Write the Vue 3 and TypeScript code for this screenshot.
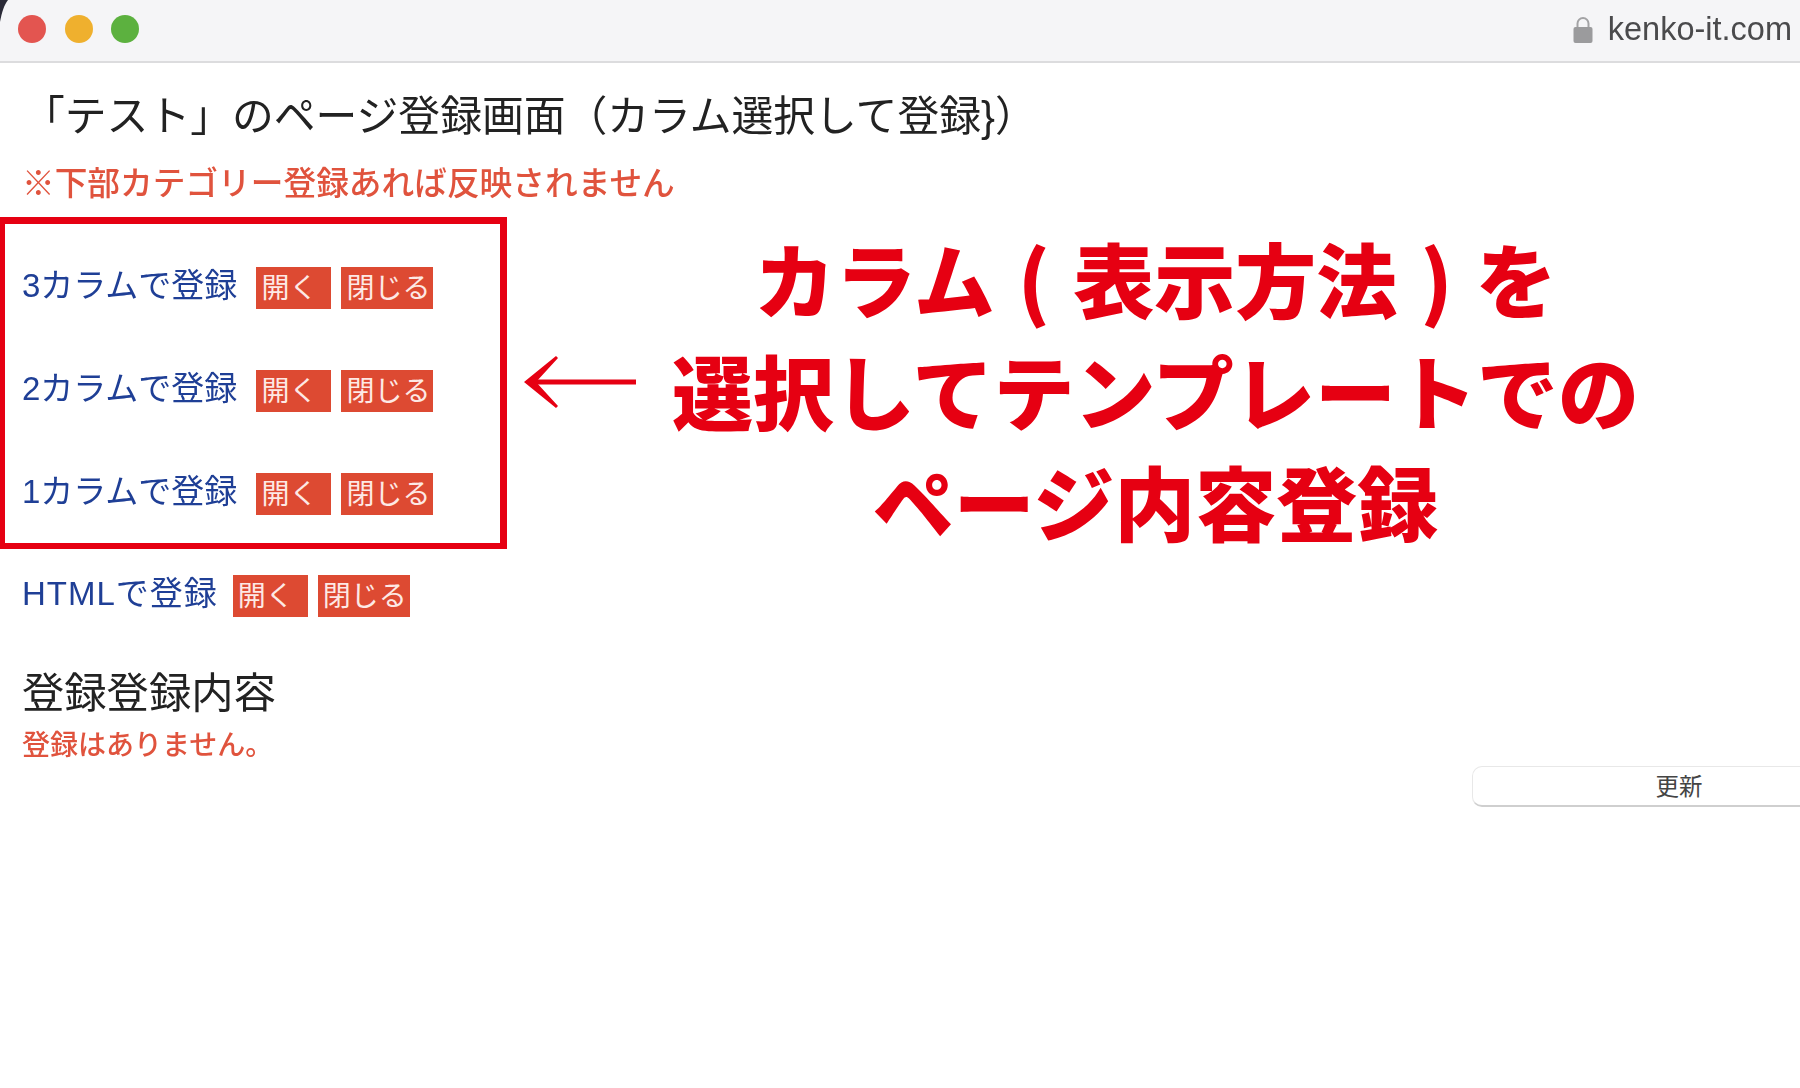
<template>
  <div class="window">
    <header class="toolbar">
      <svg class="corner" width="8" height="22" viewBox="0 0 8 22">
        <path d="M0 0H8C4 5 2 12 0 22Z" fill="#2b2b38" />
      </svg>
      <div class="lights">
        <span class="light red"></span>
        <span class="light yellow"></span>
        <span class="light green"></span>
      </div>
      <div class="address">
        <svg class="lock" width="20" height="27" viewBox="0 0 20 27">
          <path d="M4.5 12V7.5a5.5 5.5 0 0 1 11 0V12" fill="none" stroke="#a3a3a5" stroke-width="2" />
          <rect x="0.5" y="11" width="19" height="16" rx="2" fill="#9b9b9d" />
        </svg>
        <span>kenko-it.com</span>
      </div>
    </header>

    <main class="content">
      <h1 class="title">「テスト」のページ登録画面（カラム選択して登録}）</h1>
      <p class="notice">※下部カテゴリー登録あれば反映されません</p>

      <div class="column-box">
        <div v-for="row in columnRows" :key="row" class="row">
          <a class="link">{{ row }}</a>
          <span class="tag open">開く</span>
          <span class="tag close">閉じる</span>
        </div>
      </div>

      <div class="row html-row">
        <a class="link">HTMLで登録</a>
        <span class="tag open">開く</span>
        <span class="tag close">閉じる</span>
      </div>

      <h2 class="subtitle">登録登録内容</h2>
      <p class="empty">登録はありません。</p>

      <div class="actions">
        <button class="update" type="button">更新</button>
      </div>
    </main>

    <aside class="annotation">
      <svg class="arrow" width="112" height="54" viewBox="0 0 112 54">
        <path d="M112 24.5H12V29.5H112Z" fill="#e60012" />
        <path d="M32 1 L0 27 L32 53 L34 51 L12 27 L34 3Z" fill="#e60012" />
      </svg>
      <div class="annotation-text">
        <div v-for="line in noteLines" :key="line">{{ line }}</div>
      </div>
    </aside>
  </div>
</template>

<script setup lang="ts">
const columnRows: string[] = ['3カラムで登録', '2カラムで登録', '1カラムで登録']
const noteLines: string[] = ['カラム ( 表示方法 ) を', '選択してテンプレートでの', 'ページ内容登録']
</script>

<style>
html,
body {
  margin: 0;
  background: #fff;
  overflow: hidden;
}
</style>

<style scoped>
.window {
  position: relative;
  width: 1800px;
  height: 1088px;
  overflow: hidden;
  background: #fff;
  font-family: 'Liberation Sans', 'Noto Sans CJK JP', sans-serif;
}

.toolbar {
  position: relative;
  display: flex;
  align-items: center;
  justify-content: space-between;
  box-sizing: border-box;
  height: 63px;
  padding: 0 8px 2px 18px;
  background: #f5f5f7;
  border-bottom: 2px solid #dcdcde;
}

.corner {
  position: absolute;
  left: 0;
  top: 0;
}

.lights {
  display: flex;
  gap: 18.5px;
  margin-top: -1px;
}

.light {
  width: 28px;
  height: 28px;
  border-radius: 50%;
}

.red {
  background: #e35550;
}

.yellow {
  background: #efb02e;
}

.green {
  background: #5cb13f;
}

.address {
  display: flex;
  align-items: center;
  gap: 15px;
  font-size: 32.5px;
  color: #4a4a4c;
  filter: blur(0.4px);
}

.content {
  display: flex;
  flex-direction: column;
  align-items: flex-start;
}

.title {
  margin: 30px 0 0 23px;
  font-size: 41.8px;
  line-height: 48px;
  font-weight: 400;
  color: #222;
  white-space: nowrap;
  filter: blur(0.4px);
}

.notice {
  margin: 23px 0 0 22px;
  font-size: 32.7px;
  line-height: 40px;
  font-weight: 500;
  color: #e0533d;
  white-space: nowrap;
  filter: blur(0.4px);
}

.column-box {
  display: flex;
  flex-direction: column;
  gap: 61px;
  box-sizing: border-box;
  width: 507px;
  margin-top: 13px;
  padding: 43px 0 28px 17px;
  border: solid #e60012;
  border-width: 7px 7px 6px 5px;
}

.row {
  display: flex;
  align-items: center;
  height: 42px;
}

.html-row {
  margin: 26px 0 0 22px;
}

.link {
  align-self: flex-start;
  margin: -2px 19px 0 0;
  font-size: 33px;
  line-height: 42px;
  color: #1f3f96;
  white-space: nowrap;
  filter: blur(0.4px);
}

.html-row .link {
  margin-right: 15px;
  letter-spacing: 1px;
}

.tag {
  display: flex;
  align-items: center;
  box-sizing: border-box;
  height: 42px;
  padding: 0 0 4px 5px;
  font-size: 28px;
  color: #fde9e5;
  background: #dd4a32;
}

.open {
  width: 75px;
  margin-right: 10px;
}

.close {
  width: 92px;
}

.subtitle {
  margin: 51px 0 0 22px;
  font-size: 42.3px;
  line-height: 52px;
  font-weight: 400;
  color: #222;
  filter: blur(0.4px);
}

.empty {
  margin: 8px 0 0 22px;
  font-size: 28px;
  line-height: 36px;
  font-weight: 500;
  color: #e0533d;
  filter: blur(0.4px);
}

.actions {
  align-self: stretch;
  display: flex;
  justify-content: flex-end;
  margin-top: 2px;
}

.update {
  box-sizing: border-box;
  flex: none;
  width: 414px;
  height: 41px;
  margin-right: -86px;
  padding: 4px 0 0;
  font: inherit;
  font-size: 23.5px;
  line-height: 1;
  color: #444;
  background: #fff;
  border: 1px solid #e8e8e8;
  border-bottom: 2px solid #cfcfcf;
  border-radius: 10px;
}

/* red note drawn over the screenshot */
.annotation {
  position: absolute;
  left: 524px;
  top: 221px;
  display: flex;
  align-items: center;
  gap: 33px;
}

.arrow {
  margin-bottom: 12px;
}

.annotation-text {
  width: 973px;
  font-family: 'Noto Sans CJK JP', sans-serif;
  font-size: 81px;
  line-height: 111.5px;
  font-weight: 900;
  word-spacing: 4.5px;
  color: #e60012;
  text-align: center;
  white-space: nowrap;
}
</style>
